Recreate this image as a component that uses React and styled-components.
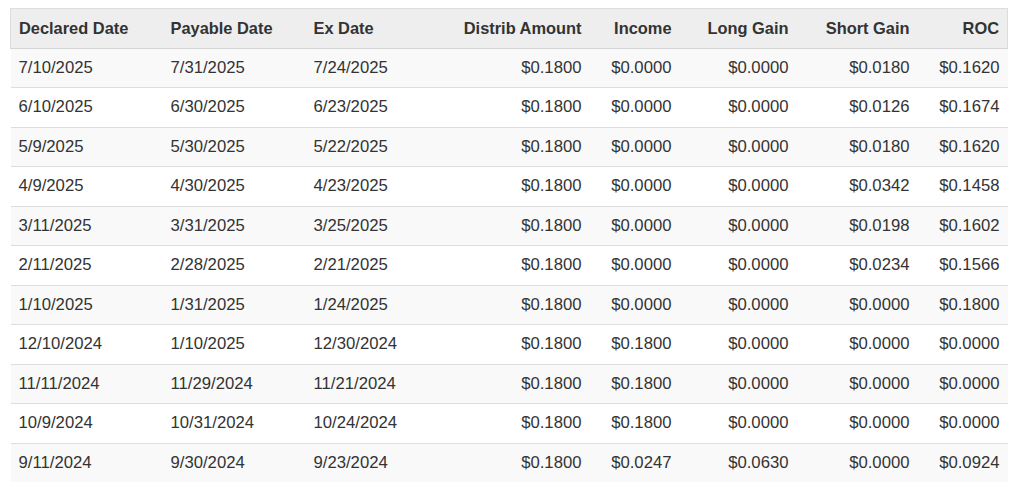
import styled, { createGlobalStyle } from "styled-components";

const GlobalStyle = createGlobalStyle`
  body {
    margin: 0;
    background: #fff;
    font-family: "Liberation Sans", Arial, Helvetica, sans-serif;
    color: #333;
  }
`;

const Wrapper = styled.div`
  padding: 8px 6px 0 10px;
`;

const Table = styled.table`
  width: 997px;
  border-collapse: collapse;
  border-spacing: 0;
  table-layout: fixed;
  font-size: 16.7px;
  line-height: 22.5px;
`;

const HeadRow = styled.tr`
  background: #eeeeee;
  border: 1px solid #dddddd;
`;

const Th = styled.th`
  padding: 8px;
  font-weight: bold;
  font-size: 16.4px;
  text-align: ${(p) => (p.$right ? "right" : "left")};
  border-bottom: 1px solid #d6d6d6;
  white-space: nowrap;
`;

const Row = styled.tr`
  background: ${(p) => (p.$odd ? "#f9f9f9" : "#ffffff")};
`;

const Td = styled.td`
  padding: 8px;
  text-align: ${(p) => (p.$right ? "right" : "left")};
  border-top: 1px solid #dddddd;
  white-space: nowrap;
`;

const columns = [
  { label: "Declared Date", width: 152 },
  { label: "Payable Date", width: 143 },
  { label: "Ex Date", width: 150 },
  { label: "Distrib Amount", width: 134, right: true },
  { label: "Income", width: 90, right: true },
  { label: "Long Gain", width: 117, right: true },
  { label: "Short Gain", width: 121, right: true },
  { label: "ROC", width: 90, right: true },
];

const rows = [
  ["7/10/2025", "7/31/2025", "7/24/2025", "0.1800", "0.0000", "0.0000", "0.0180", "0.1620"],
  ["6/10/2025", "6/30/2025", "6/23/2025", "0.1800", "0.0000", "0.0000", "0.0126", "0.1674"],
  ["5/9/2025", "5/30/2025", "5/22/2025", "0.1800", "0.0000", "0.0000", "0.0180", "0.1620"],
  ["4/9/2025", "4/30/2025", "4/23/2025", "0.1800", "0.0000", "0.0000", "0.0342", "0.1458"],
  ["3/11/2025", "3/31/2025", "3/25/2025", "0.1800", "0.0000", "0.0000", "0.0198", "0.1602"],
  ["2/11/2025", "2/28/2025", "2/21/2025", "0.1800", "0.0000", "0.0000", "0.0234", "0.1566"],
  ["1/10/2025", "1/31/2025", "1/24/2025", "0.1800", "0.0000", "0.0000", "0.0000", "0.1800"],
  ["12/10/2024", "1/10/2025", "12/30/2024", "0.1800", "0.1800", "0.0000", "0.0000", "0.0000"],
  ["11/11/2024", "11/29/2024", "11/21/2024", "0.1800", "0.1800", "0.0000", "0.0000", "0.0000"],
  ["10/9/2024", "10/31/2024", "10/24/2024", "0.1800", "0.1800", "0.0000", "0.0000", "0.0000"],
  ["9/11/2024", "9/30/2024", "9/23/2024", "0.1800", "0.0247", "0.0630", "0.0000", "0.0924"],
];

export default function App() {
  return (
    <Wrapper>
      <GlobalStyle />
      <Table>
        <colgroup>
          {columns.map((c) => (
            <col key={c.label} style={{ width: c.width }} />
          ))}
        </colgroup>
        <thead>
          <HeadRow>
            {columns.map((c) => (
              <Th key={c.label} $right={c.right}>
                {c.label}
              </Th>
            ))}
          </HeadRow>
        </thead>
        <tbody>
          {rows.map((r, i) => (
            <Row key={i} $odd={i % 2 === 0}>
              {r.map((v, j) =>
                j < 3 ? (
                  <Td key={j}>{v}</Td>
                ) : (
                  <Td key={j} $right>
                    ${v}
                  </Td>
                )
              )}
            </Row>
          ))}
        </tbody>
      </Table>
    </Wrapper>
  );
}
